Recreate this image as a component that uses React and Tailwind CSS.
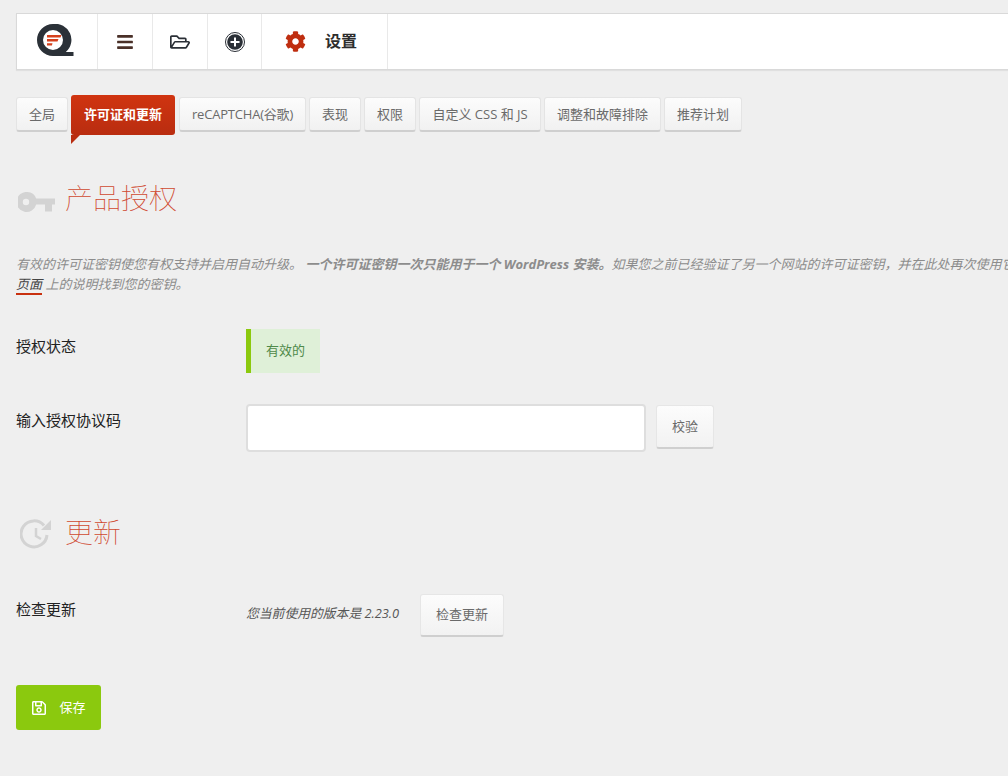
import React from "react";
import { FaBars, FaRegFolderOpen, FaCog, FaRegSave } from "react-icons/fa";

const font = "font-['Open_Sans','Noto_Sans_CJK_SC',sans-serif]";

function Logo() {
  return (
    <svg width="37" height="32" viewBox="0 0 37 32">
      <path d="M16 0a16 16 0 1 0 0 32h20.500v-4h-7.700A16 16 0 0 0 16 0Zm0 6a10 10 0 1 1 0 20 10 10 0 0 1 0-20Z" fill="#2b3138" fillRule="evenodd" />
      <path d="M10 11h14.500l-1 2.500H10Z M10 15h11.500l-1 2.500H10Z M10 19.200h5.500l-.6 2.300H10Z" fill="#d5401c" />
    </svg>
  );
}

function PlusCircle() {
  return (
    <svg width="20" height="20" viewBox="0 0 20 20">
      <circle cx="10" cy="10" r="9.500" fill="none" stroke="#2a2f36" strokeWidth="1" />
      <circle cx="10" cy="10" r="7.800" fill="#2a2f36" />
      <path d="M10 5.500v9M5.500 10h9" stroke="#fff" strokeWidth="2" />
    </svg>
  );
}

function KeyIcon() {
  return (
    <svg width="37" height="20" viewBox="0 0 37 20">
      <path d="M9.500 0a10 10 0 0 1 8.700 6.500H37v6h-3v7h-7v-7h-8.800A10 10 0 1 1 9.500 0Zm-1.500 6.800a3.200 3.200 0 1 0 0 6.400 3.200 3.200 0 0 0 0-6.400Z" fill="#d3d3d3" fillRule="evenodd" />
    </svg>
  );
}

function HistoryIcon() {
  return (
    <svg width="32" height="30" viewBox="0 0 32 30">
      <path d="M24 6.500A13 13 0 1 0 27 16" fill="none" stroke="#d3d3d3" strokeWidth="3" />
      <path d="M31 1v10H21Z" fill="#d3d3d3" />
      <path d="M16 9v8l5 3" fill="none" stroke="#d3d3d3" strokeWidth="2.500" />
    </svg>
  );
}

const tabClass =
  "h-[35px] px-[12px] pt-[2px] flex items-center justify-center rounded-[3px] border border-[#e4e4e4] border-b-[#cfcfcf] border-b-2 bg-gradient-to-b from-[#fcfcfc] to-[#f1f1f1] text-[13px] text-[#6a6a6a] whitespace-nowrap";

function Tab({ children, className = "" }) {
  return <div className={`${tabClass} ${className}`}>{children}</div>;
}

function ActiveTab({ children }) {
  return (
    <div className="relative -mt-[2px] mr-[1px] h-[40px] px-[13px] flex items-center rounded-[3px] bg-gradient-to-b from-[#d03410] to-[#b92d10] text-[13px] font-bold text-white whitespace-nowrap">
      {children}
      <span className="absolute left-0 top-[40px] border-t-[9px] border-r-[9px] border-t-[#b92d10] border-r-transparent" />
    </div>
  );
}

function NavCell({ children, className }) {
  return (
    <div className={`h-full flex items-center justify-center border-r border-[#e9e9e9] ${className}`}>
      {children}
    </div>
  );
}

function SmallButton({ children, className }) {
  return (
    <button className={`flex items-center justify-center rounded-[3px] border border-[#e6e6e6] border-b-2 border-b-[#cfcfcf] bg-gradient-to-b from-[#fcfcfc] to-[#f2f2f2] text-[13px] text-[#6a6a6a] ${className}`}>
      {children}
    </button>
  );
}

export default function App() {
  return (
    <div className={`w-[1008px] h-[776px] overflow-hidden bg-[#efefef] ${font} pl-4 pt-[13px]`}>
      <div className="w-[1040px] h-[57px] flex items-center bg-white border border-[#d9d9d9] shadow-[0_1px_1px_rgba(0,0,0,0.06)]">
        <NavCell className="w-[81px] pr-[4px] pb-[3px]"><Logo /></NavCell>
        <NavCell className="w-[55px]"><FaBars size={18} color="#4a3028" /></NavCell>
        <NavCell className="w-[55px]"><FaRegFolderOpen size={20} color="#2a2f36" /></NavCell>
        <NavCell className="w-[54px]"><PlusCircle /></NavCell>
        <NavCell className="w-[126px] gap-[19px] pr-[7px]">
          <FaCog size={21} color="#bf2e10" />
          <span className="text-[16px] font-bold text-[#2d2d2d] leading-none pb-[2px]">设置</span>
        </NavCell>
      </div>

      <div className="mt-[27px] flex items-start gap-[3px]">
        <Tab>全局</Tab>
        <ActiveTab>许可证和更新</ActiveTab>
        <Tab className="w-[127px] !px-0 tracking-[-0.2px]">reCAPTCHA(谷歌)</Tab>
        <Tab>表现</Tab>
        <Tab>权限</Tab>
        <Tab className="w-[122px] !px-0">自定义 CSS 和 JS</Tab>
        <Tab>调整和故障排除</Tab>
        <Tab>推荐计划</Tab>
      </div>

      <div className="mt-[43px] flex items-center h-[40px]">
        <div className="w-[49px] pl-[1.500px] pt-[7px]"><KeyIcon /></div>
        <h2 className="text-[28px] font-thin text-[#d0492f] leading-none">产品授权</h2>
      </div>

      <p className="mt-[36px] text-[13px] italic text-[#8c8c8c] leading-[20px] whitespace-nowrap">
        有效的许可证密钥使您有权支持并启用自动升级。 <b>一个许可证密钥一次只能用于一个 WordPress 安装。</b>如果您之前已经验证了另一个网站的许可证密钥，并在此处再次使用它
        <br />
        <a className="text-[#444] border-b-2 border-[#c9310f]">页面</a> 上的说明找到您的密钥。
      </p>

      <div className="mt-[35px] flex items-start">
        <div className="w-[230px] text-[15px] text-[#222] leading-[34px]">授权状态</div>
        <div className="w-[74px] h-[44px] flex items-center justify-center bg-[#dff0d8] border-l-[5px] border-[#8bc90e] text-[13px] text-[#4f8a4a]">有效的</div>
      </div>

      <div className="mt-[31px] flex items-start">
        <div className="w-[230px] text-[15px] text-[#222] leading-[32px]">输入授权协议码</div>
        <input className="w-[400px] h-[48px] bg-white rounded-[4px] border-2 border-[#dedede]" />
        <SmallButton className="ml-[10px] mt-[1px] w-[58px] h-[44px]">校验</SmallButton>
      </div>

      <div className="mt-[60px] flex items-center h-[40px]">
        <div className="w-[49px] pl-[4px] pt-[4px]"><HistoryIcon /></div>
        <h2 className="text-[28px] font-thin text-[#d0492f] leading-none">更新</h2>
      </div>

      <div className="mt-[42px] flex items-start">
        <div className="w-[230px] text-[15px] text-[#222] leading-[30px]">检查更新</div>
        <div className="text-[12.800px] italic text-[#555] leading-[38px]">您当前使用的版本是 2.23.0</div>
        <SmallButton className="ml-[21px] w-[84px] h-[43px]">检查更新</SmallButton>
      </div>

      <button className="mt-[48px] w-[85px] h-[45px] flex items-center justify-center gap-[12px] rounded-[3px] bg-[#8bc90e] text-white text-[13px]">
        <FaRegSave size={16} />
        <span>保存</span>
      </button>
    </div>
  );
}
